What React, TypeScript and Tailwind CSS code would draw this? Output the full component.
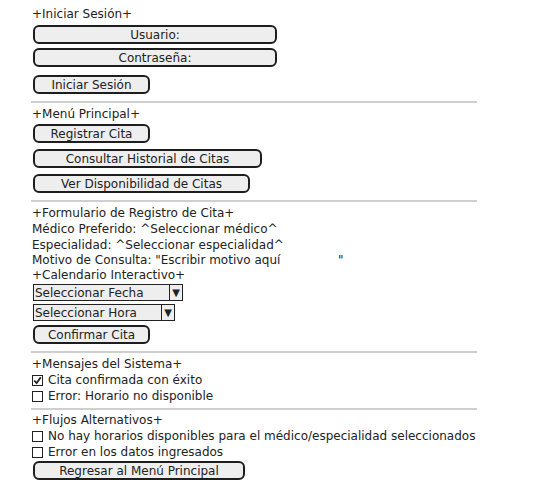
import { ReactNode } from 'react';

const font = { fontFamily: '"DejaVu Sans", sans-serif' };

function Btn({ w, children }: { w: string; children: ReactNode }) {
  return (
    <div
      className={`${w} h-[19px] border-2 border-[#1e1e1e] rounded-[6px] bg-[#eeeeee] flex items-center justify-center text-[12px] leading-none text-[#222]`}
    >
      {children}
    </div>
  );
}

function Select({ w, label }: { w: string; label: string }) {
  return (
    <div className={`${w} h-[17px] flex border border-[#222] bg-[#eeeeee] text-[12px] leading-none text-[#222]`}>
      <div className="flex-1 flex items-center pl-[1px] border-r border-[#222]">{label}</div>
      <div className="w-[12px] flex items-center justify-center text-[10px]">▼</div>
    </div>
  );
}

function Check({ checked, children }: { checked?: boolean; children: ReactNode }) {
  return (
    <div className="h-[16px] flex items-center gap-[5px]">
      <div className="w-[11px] h-[11px] border border-[#222] flex items-center justify-center">
        {checked && (
          <svg width="9" height="9" viewBox="0 0 9 9">
            <path d="M1.2 4.5 L3.6 7 L7.8 1.2" stroke="#222" strokeWidth="1.8" fill="none" />
          </svg>
        )}
      </div>
      <span>{children}</span>
    </div>
  );
}

function Sep() {
  return <div className="w-[446px] h-[2px] bg-[#cfcfcf] -ml-[2px]" />;
}

export default function App() {
  return (
    <div className="w-[538px] h-[491px] bg-white text-[12px] leading-[16px] text-[#222]" style={font}>
      <div className="pl-[33px] pt-[6px] flex flex-col">
        <div className="h-[16px] -ml-[1px]">+Iniciar Sesión+</div>
        <div className="flex flex-col gap-[4px] mt-[3px]">
          <Btn w="w-[244px]">Usuario:</Btn>
          <Btn w="w-[244px]">Contraseña:</Btn>
        </div>
        <div className="mt-[8px]">
          <Btn w="w-[117px]">Iniciar Sesión</Btn>
        </div>
        <div className="mt-[7px]">
          <Sep />
        </div>

        <div className="h-[16px] mt-[3px] -ml-[1px]">+Menú Principal+</div>
        <div className="flex flex-col gap-[6px] mt-[2px]">
          <Btn w="w-[117px]">Registrar Cita</Btn>
          <Btn w="w-[229px]">Consultar Historial de Citas</Btn>
          <Btn w="w-[217px]">Ver Disponibilidad de Citas</Btn>
        </div>
        <div className="mt-[7px]">
          <Sep />
        </div>

        <div className="flex flex-col mt-[3px] -ml-[1px]">
          <div className="h-[16px]">+Formulario de Registro de Cita+</div>
          <div className="h-[16px]">Médico Preferido: ^Seleccionar médico^</div>
          <div className="h-[15px]">Especialidad: ^Seleccionar especialidad^</div>
          <div className="h-[15px] flex">
            <span className="w-[306px]">Motivo de Consulta: "Escribir motivo aquí</span>
            <span>"</span>
          </div>
          <div className="h-[15px]">+Calendario Interactivo+</div>
        </div>
        <div className="flex flex-col gap-[3px] mt-[2px]">
          <Select w="w-[150px]" label="Seleccionar Fecha" />
          <Select w="w-[142px]" label="Seleccionar Hora" />
        </div>
        <div className="mt-[4px]">
          <Btn w="w-[117px]">Confirmar Cita</Btn>
        </div>
        <div className="mt-[7px]">
          <Sep />
        </div>

        <div className="flex flex-col mt-[3px] -ml-[1px]">
          <div className="h-[16px]">+Mensajes del Sistema+</div>
          <Check checked>Cita confirmada con éxito</Check>
          <Check>Error: Horario no disponible</Check>
        </div>
        <div className="mt-[4px]">
          <Sep />
        </div>

        <div className="flex flex-col mt-[2px] -ml-[1px]">
          <div className="h-[16px]">+Flujos Alternativos+</div>
          <Check>No hay horarios disponibles para el médico/especialidad seleccionados</Check>
          <Check>Error en los datos ingresados</Check>
        </div>
        <div className="mt-[1px]">
          <Btn w="w-[212px]">Regresar al Menú Principal</Btn>
        </div>
      </div>
    </div>
  );
}
